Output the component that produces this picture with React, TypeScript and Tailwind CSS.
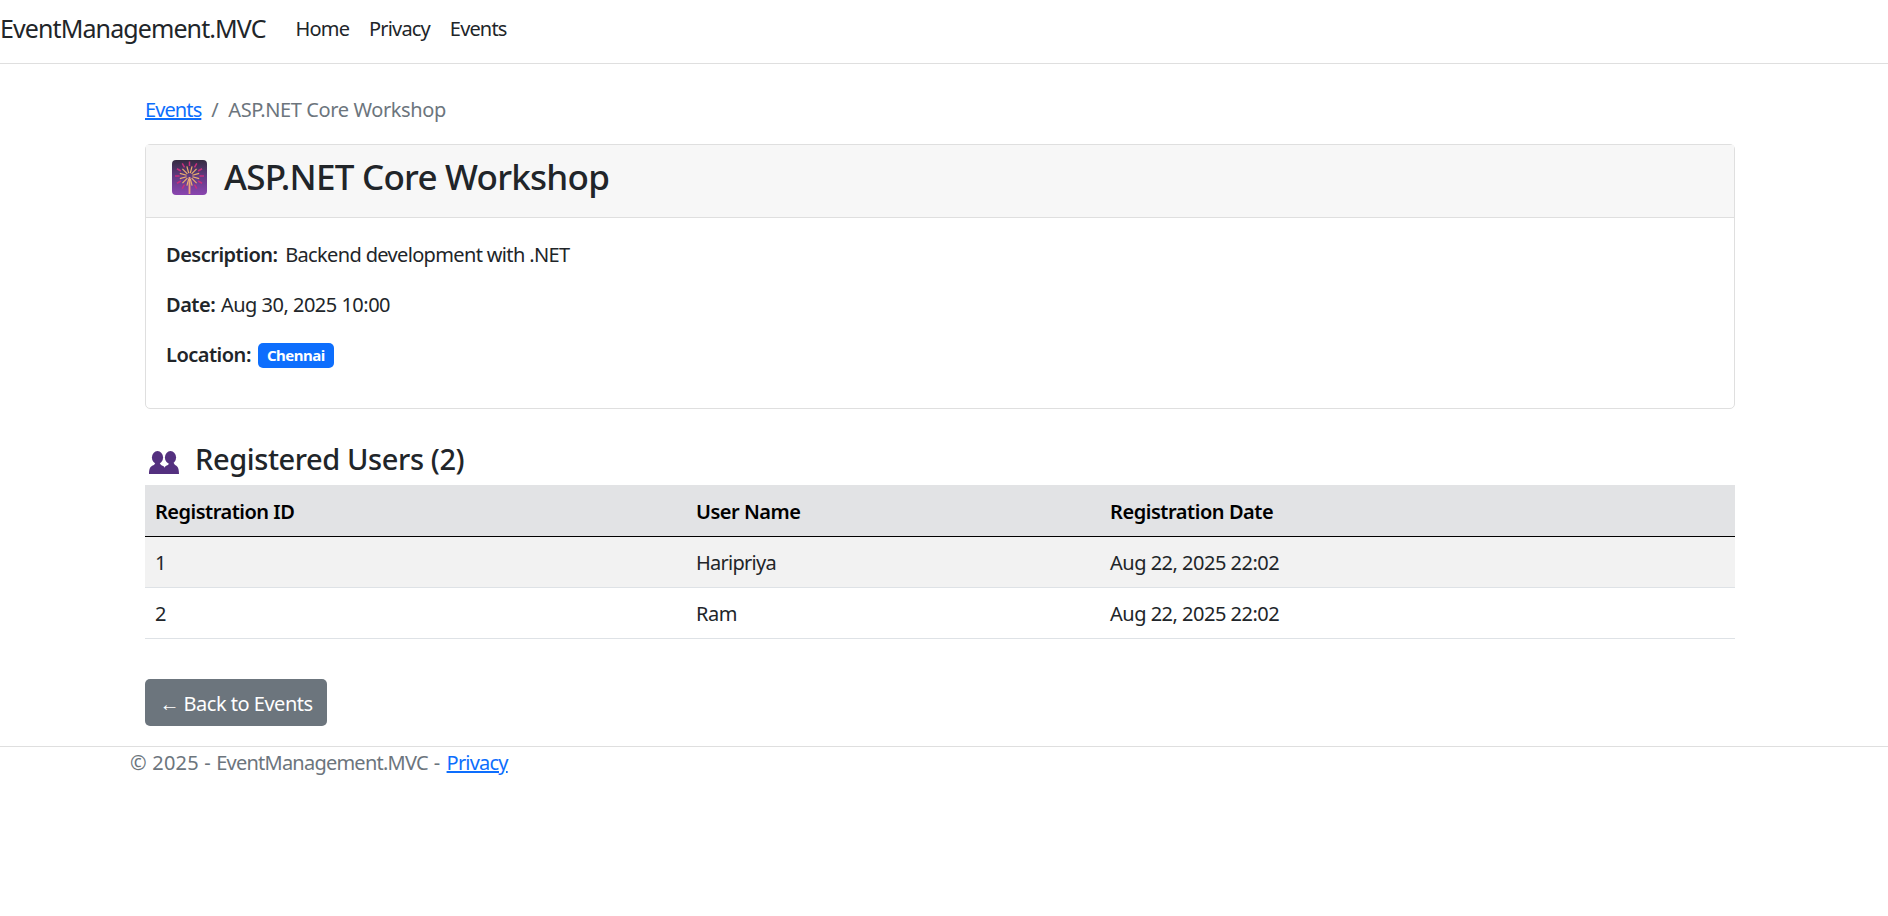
const font = { fontFamily: '"Noto Sans", sans-serif' };

function Fireworks() {
  const rays = Array.from({ length: 12 }, (_, i) => (i * Math.PI * 2) / 12);
  return (
    <svg width="35" height="35" viewBox="0 0 35 35" className="mb-[7px] shrink-0">
      <defs>
        <linearGradient id="fw" x1="0" y1="0" x2="0" y2="1">
          <stop offset="0" stopColor="#352a40" />
          <stop offset="0.45" stopColor="#5f3a80" />
          <stop offset="1" stopColor="#8a45b0" />
        </linearGradient>
      </defs>
      <rect x="0" y="0" width="35" height="35" rx="4" fill="url(#fw)" />
      {rays.map((a, i) => (
        <line
          key={i}
          x1={17.5 + Math.cos(a) * 10}
          y1={16 + Math.sin(a) * 10}
          x2={17.5 + Math.cos(a) * 14.5}
          y2={16 + Math.sin(a) * 14.5}
          stroke="#c92f7c"
          strokeWidth="1.5"
        />
      ))}
      {rays.map((a, i) => (
        <line
          key={i}
          x1={17.5 + Math.cos(a + 0.26) * 3}
          y1={16 + Math.sin(a + 0.26) * 3}
          x2={17.5 + Math.cos(a + 0.26) * 10}
          y2={16 + Math.sin(a + 0.26) * 10}
          stroke="#eeb06c"
          strokeWidth="1.2"
        />
      ))}
      <line x1="17.5" y1="17" x2="17.5" y2="34" stroke="#e8a47c" strokeWidth="1.8" />
    </svg>
  );
}

function Users() {
  return (
    <svg width="30" height="23" viewBox="0 0 30 23" className="mb-[-7px] shrink-0">
      <g fill="#54307f">
        <ellipse cx="8.5" cy="6.5" rx="5.6" ry="6.5" />
        <path d="M0 23c0-5 1-8 5-9l2-3h3l2 3 3 1.500V23z" />
        <ellipse cx="21.5" cy="6.500" rx="5.6" ry="6.5" />
        <path d="M14 23c0-5 1-8 5-9l2-3h3l2 3c3 1 4 4 4 9z" />
      </g>
    </svg>
  );
}

export default function App() {
  return (
    <div style={font} className="min-h-[916px] bg-white text-[20px] leading-[30px] text-[#212529]">
      <nav className="flex h-[64px] items-center border-b border-[#dfdfdf] pb-[6px]">
        <a className="mb-[2px] text-[25px] leading-[38px] tracking-[-0.9px]">EventManagement.MVC</a>
        <div className="ml-[30px] flex gap-[20px] tracking-[-0.85px]">
          <a>Home</a>
          <a>Privacy</a>
          <a>Events</a>
        </div>
      </nav>

      <main className="pt-[31px] pr-[153px] pl-[145px] tracking-[-0.5px]">
        <div className="flex h-[30px] items-center">
          <a className="tracking-[-0.9px] text-[#0d6efd] underline">Events</a>
          <span className="mr-[10px] ml-[10px] text-[#6c757d]">/</span>
          <span className="tracking-[-0.4px] text-[#6c757d]">ASP.NET Core Workshop</span>
        </div>

        <section className="mt-[19px] h-[265px] rounded-[5px] border border-[#dfdfdf]">
          <header className="flex h-[73px] items-center gap-[17px] border-b border-[#dfdfdf] bg-[#f7f7f7] pl-[26px]">
            <Fireworks />
            <h2 className="pb-[9px] text-[35px] leading-[42px] font-medium tracking-[-0.75px]">ASP.NET Core Workshop</h2>
          </header>
          <div className="px-[20px] pt-[22px]">
            <p className="mb-[20px]"><strong className="font-semibold">Description:</strong> <span className="ml-[3px] tracking-[-0.65px]">Backend development with .NET</span></p>
            <p className="mb-[20px]"><strong className="font-semibold">Date:</strong> <span className="ml-[1px]">Aug 30, 2025 10:00</span></p>
            <p className="flex items-center">
              <strong className="font-semibold">Location:</strong>
              <span className="ml-[7px] rounded-[5px] bg-[#0d6efd] px-[9px] py-[4px] text-[15px] leading-[17px] font-bold tracking-[-0.5px] text-white">Chennai</span>
            </p>
          </div>
        </section>

        <h3 className="mt-[30px] flex h-[46px] items-center gap-[16px] pb-[6px] pl-[4px] text-[29px] leading-[34px] font-medium tracking-[-0.4px]">
          <Users />
          Registered Users (2)
        </h3>

        <table className="w-full table-fixed border-collapse">
          <thead>
            <tr className="h-[51px] border-b border-black bg-[#e2e3e5] text-left text-black">
              <th className="w-[541px] pt-[4px] pl-[10px] font-semibold">Registration ID</th>
              <th className="w-[414px] pt-[4px] pl-[10px] font-semibold">User Name</th>
              <th className="pt-[4px] pl-[10px] font-semibold tracking-[-0.45px]">Registration Date</th>
            </tr>
          </thead>
          <tbody>
            <tr className="h-[51px] border-b border-[#dee2e6] bg-[#f2f2f2]">
              <td className="pt-[2px] pl-[10px]">1</td>
              <td className="pt-[2px] pl-[10px] tracking-[-0.75px]">Haripriya</td>
              <td className="pt-[2px] pl-[10px]">Aug 22, 2025 22:02</td>
            </tr>
            <tr className="h-[51px] border-b border-[#dee2e6]">
              <td className="pt-[2px] pl-[10px]">2</td>
              <td className="pt-[2px] pl-[10px]">Ram</td>
              <td className="pt-[2px] pl-[10px]">Aug 22, 2025 22:02</td>
            </tr>
          </tbody>
        </table>

        <a className="mt-[40px] inline-flex h-[47px] w-[182px] items-center justify-center rounded-[5px] bg-[#6c757d] pt-[4px] text-white">← Back to Events</a>
      </main>

      <footer className="mt-[20px] flex h-[36px] items-center border-t border-[#dfdfdf] pb-[2px] pl-[130px] text-[#6c757d]">
        <span className="whitespace-pre tracking-[0.2px]">© 2025 - </span>
        <span className="whitespace-pre tracking-[-0.77px]">EventManagement.MVC</span>
        <span className="whitespace-pre tracking-[0.65px]"> - </span>
        <a className="tracking-[-0.8px] text-[#0d6efd] underline">Privacy</a>
      </footer>
    </div>
  );
}
